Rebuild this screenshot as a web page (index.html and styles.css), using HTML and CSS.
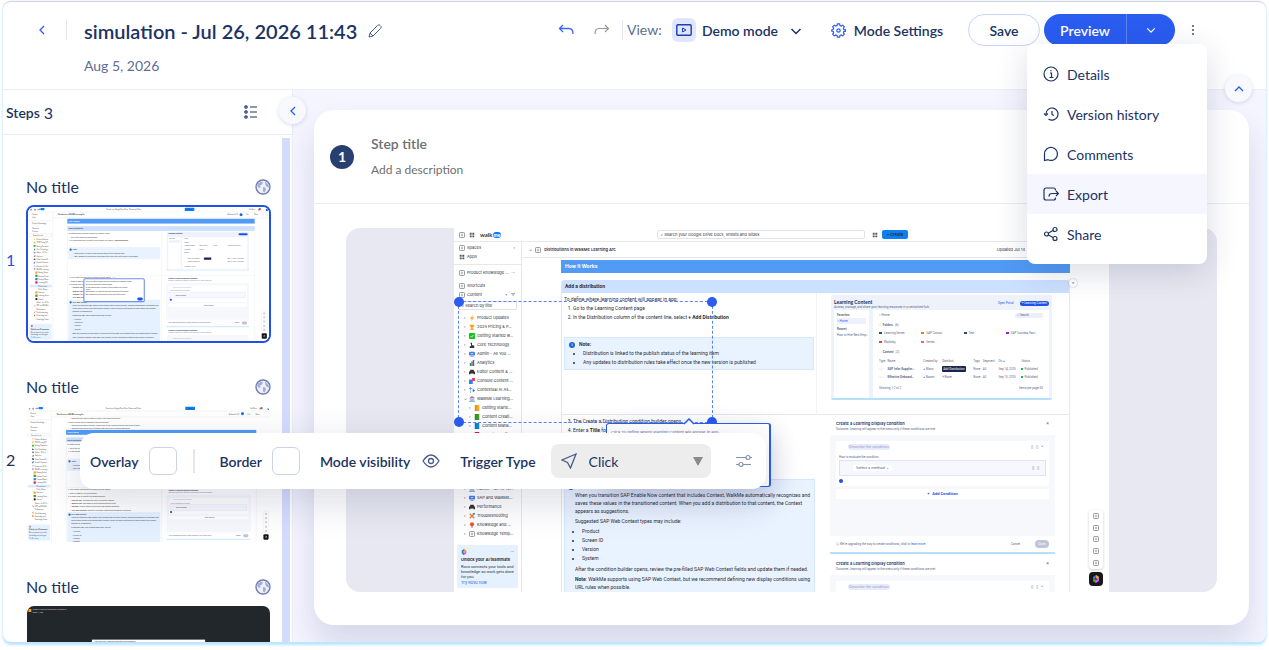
FILE: index.html
```html
<!DOCTYPE html>
<html lang="en">
<head>
  <meta charset="UTF-8">
  <title>Simulation editor</title>
  <link rel="stylesheet" href="styles.css">
</head>
<body>
<svg class="sprite" width="0" height="0" aria-hidden="true">
  <symbol id="globe" viewBox="0 0 16 16">
    <circle cx="8" cy="8" r="7" fill="#eef0fb" stroke="#6f7bb5" stroke-width="1.400"/>
    <path d="M3 4.500 6 2.500l2 1-1 2-2 1 .5 2-1.500 .5L2.200 7zM8 8l2.500 .8.5 1.700-1.500 3-1.500-1zM10 2.500l3.500 3 .5 3-2-.5-1.500-2z" fill="#a3aed6"/>
  </symbol>
  <symbol id="left" viewBox="0 0 12 12"><path d="M8 2 4 6l4 4" fill="none" stroke="currentColor" stroke-width="1.300"/></symbol>
  <symbol id="down" viewBox="0 0 12 12"><path d="M1.500 4 6 8.500 10.500 4" fill="none" stroke="currentColor" stroke-width="1.500"/></symbol>
  <symbol id="bolt" viewBox="0 0 8 8"><path d="M5 0 1 5h2.500L3 8l4-5H4.500z" fill="#ffb020"/></symbol>
  <symbol id="trophy" viewBox="0 0 8 8"><path d="M1 1h6v2L5 5v1h1v2H2V6h1V5L1 3z" fill="#f5a623"/></symbol>
  <symbol id="check" viewBox="0 0 8 8"><rect width="8" height="8" rx="1" fill="#14c41c"/><path d="m2 4 1.500 1.500L6 2.500" fill="none" stroke="#fff"/></symbol>
  <symbol id="arm" viewBox="0 0 8 8"><path d="M2 1h2v3l3 1v3H1V6l2-1z" fill="#333"/></symbol>
  <symbol id="monitor" viewBox="0 0 8 8"><rect y="1" width="8" height="5" rx="1" fill="#4c7df0"/><path d="M2 7.500h4" stroke="#4c7df0"/><path d="M2.500 3.500h3" stroke="#fff"/></symbol>
  <symbol id="chart" viewBox="0 0 8 8"><path d="M1 4h2v4H1z" fill="#18a05e"/><path d="M3 2h2v6H3z" fill="#e34b4b"/><path d="M5 0h2v8H5z" fill="#1f6feb"/></symbol>
  <symbol id="car" viewBox="0 0 8 8"><path d="M1 3 2 1h4l1 2 1 1v3H6V6H2v1H0V4z" fill="#333"/></symbol>
  <symbol id="rocket" viewBox="0 0 8 8"><path d="M0 2h5v6H0z" fill="#2684ff"/><path d="M4 0h4v4H4z" fill="#f1416c"/></symbol>
  <symbol id="spark" viewBox="0 0 8 8"><path d="M2 0v4M0 2h4M2 5v3" stroke="#4c8dff"/><path d="m5 2 3 3-3 2z" fill="#1a73e8"/></symbol>
  <symbol id="school" viewBox="0 0 8 8"><path d="M0 3 4 0l4 3z" fill="#e0654a"/><path d="M1 3h6v4H1z" fill="#9fc3ff"/><path d="M0 7.500h8" stroke="#5a7"/></symbol>
  <symbol id="book" viewBox="0 0 8 8"><path d="M1 0h6v8H1z" fill="currentColor"/><path d="M2.200 0v8" stroke="#0003"/></symbol>
  <symbol id="wrench" viewBox="0 0 8 8"><path d="m1 1 6 6M7 1 1 7" stroke="#e8752b" stroke-width="1.500"/><path d="M5 0h3v2H5z" fill="#4d8bf5"/></symbol>
  <symbol id="pin" viewBox="0 0 8 8"><circle cx="4" cy="3" r="2.800" fill="#f05a28"/><path d="M4 5v3" stroke="#a33"/></symbol>
  <symbol id="page" viewBox="0 0 8 8"><rect x=".6" y=".6" width="6.800" height="6.800" rx="1.500" fill="none" stroke="#777"/><path d="M2.500 3h3M2.500 5h3" stroke="#777" stroke-width=".8"/></symbol>
  <symbol id="grid" viewBox="0 0 8 8"><path d="M1 1h2.500v2.500H1zM4.500 1H7v2.500H4.500zM1 4.500h2.500V7H1zM4.500 4.500H7V7H4.500z" fill="#555"/></symbol>
  <symbol id="rovo" viewBox="0 0 8 8"><path d="M4 0 1 2v4l3 2V5L2.500 4 4 3z" fill="#1f7bf2"/><path d="M4 0v3l1.500 1L4 5v3l3-2V2z" fill="#bf63f3"/><path d="M4 0 7 2 5.500 4 4 3z" fill="#fca700"/><path d="M4 8 1 6l1.500-2L4 5z" fill="#6a9a23"/></symbol>

  <symbol id="shell" viewBox="0 0 655 364">
    <rect width="655" height="364" fill="#fff"/>
    <path d="M0 13.500h655M67.500 14v350M0 36.500h67M68 29.500h587" stroke="#e3e5e9" fill="none"/>
    <g font-family="Inter, sans-serif" font-size="4" fill="#444">
      <use href="#grid" x="6" y="4" width="6" height="6"/><use href="#grid" x="16" y="4" width="6" height="6"/>
      <text x="25" y="9" font-weight="700">walk</text><rect x="34" y="3" width="11" height="6" rx="2" fill="#0b7bff"/>
      <text x="213" y="8">Search your Google Drive Docs, Sheets and Slides</text>
      <rect x="426" y="2" width="26" height="9" rx="1" fill="#0c7ff2"/><text x="433" y="8">Create</text>
      <text x="600" y="8">Ask Rovo</text><circle cx="630" cy="6" r="3" fill="#e34935"/><use href="#grid" x="624" y="4" width="6" height="6"/><circle cx="649" cy="8" r="3" fill="#1558d6"/>
      <text x="82" y="23" font-weight="700">Distributions in WalkMe Learning Arc</text>
      <text x="542" y="23">Updated Jul 14</text><circle cx="579" cy="21" r="4" fill="#1868db"/><text x="592" y="23">Edit</text><text x="614" y="23">Share</text><text x="636" y="23">⌕ ⋯</text>
      <text><tspan x="12" y="21">Spaces</tspan><tspan x="12" y="30">Apps</tspan><tspan x="12" y="46">Product Knowledge …</tspan><tspan x="12" y="59">Shortcuts</tspan><tspan x="12" y="68">Content</tspan><tspan x="14" y="79">Search by title</tspan></text>
      <rect x="4" y="73" width="60" height="8" rx="1" fill="none" stroke="#dcdfe4"/>
      <text>
        <tspan x="23" y="90">Product Updates</tspan><tspan x="23" y="99">2026 Pricing &amp; P…</tspan><tspan x="23" y="108">Getting Started w…</tspan><tspan x="23" y="117">Core Technology</tspan><tspan x="23" y="126">Admin - All You …</tspan><tspan x="23" y="135">Analytics</tspan><tspan x="23" y="144">Editor Content &amp; …</tspan><tspan x="23" y="153">Console Content …</tspan><tspan x="23" y="162">Contextual AI As…</tspan><tspan x="23" y="171">WalkMe Learning…</tspan><tspan x="28" y="180">Getting Starte…</tspan><tspan x="28" y="189">Content Creati…</tspan><tspan x="28" y="198">Content Mana…</tspan><tspan x="28" y="207">Learning Defi…</tspan><tspan x="28" y="216">Distributions</tspan><tspan x="28" y="225">Public Share…</tspan><tspan x="28" y="234">Analytics</tspan><tspan x="28" y="243">Learning Assis…</tspan><tspan x="28" y="252">Tutorial</tspan><tspan x="23" y="261">Admin - for All Te…</tspan><tspan x="23" y="270">SAP and WalkMe…</tspan><tspan x="23" y="279">Performance</tspan><tspan x="23" y="288">Troubleshooting</tspan><tspan x="23" y="297">Knowledge and …</tspan><tspan x="23" y="306">Knowledge Temp…</tspan>
      </text>
      <rect x="5" y="211" width="60" height="7" fill="#4c9aff" opacity=".2"/>
      <use href="#bolt" x="15" y="85" width="6" height="6"/><use href="#trophy" x="15" y="94" width="6" height="6"/><use href="#check" x="15" y="103" width="6" height="6"/><use href="#arm" x="15" y="112" width="6" height="6"/><use href="#monitor" x="15" y="121" width="6" height="6"/><use href="#chart" x="15" y="130" width="6" height="6"/><use href="#car" x="15" y="139" width="6" height="6"/><use href="#rocket" x="15" y="148" width="6" height="6"/><use href="#spark" x="15" y="157" width="6" height="6"/><use href="#school" x="15" y="166" width="6" height="6"/>
      <rect x="20" y="175" width="6" height="6" fill="#f5a623"/><rect x="20" y="184" width="6" height="6" fill="#3f9b2f"/><rect x="20" y="193" width="6" height="6" fill="#1187d8"/><rect x="20" y="202" width="6" height="6" fill="#e01e3c"/><rect x="20" y="229" width="6" height="6" fill="#f5a623"/><rect x="20" y="238" width="6" height="6" fill="#3f9b2f"/><circle cx="23" cy="250" r="3" fill="#222"/>
      <use href="#spark" x="15" y="265" width="6" height="6"/><use href="#wrench" x="15" y="283" width="6" height="6"/><use href="#pin" x="15" y="292" width="6" height="6"/>
      <rect x="4" y="317" width="60" height="43" rx="2" fill="#e5f1ff"/><use href="#rovo" x="8" y="320" width="6" height="6"/>
      <text><tspan x="8" y="333" font-weight="700">Unlock your AI teammate</tspan><tspan x="8" y="341">Rovo connects your tools</tspan><tspan x="8" y="347">knowledge so work gets</tspan><tspan x="8" y="356" fill="#1868db">Try Rovo now</tspan></text>
    </g>
  </symbol>

  <symbol id="floaters" viewBox="0 0 655 364">
    <rect x="635" y="281" width="14" height="59" rx="3" fill="#fff" stroke="#e6e6ea"/>
    <use href="#page" x="639" y="286" width="6" height="6"/><use href="#page" x="639" y="297" width="6" height="6"/><use href="#page" x="639" y="308" width="6" height="6"/><use href="#page" x="639" y="320" width="6" height="6"/><use href="#page" x="639" y="331" width="6" height="6"/>
    <rect x="635" y="343" width="14" height="15" rx="3" fill="#17181c"/><use href="#rovo" x="639" y="347" width="6" height="7"/>
  </symbol>

  <g id="article" font-family="Roboto, sans-serif" font-size="5" fill="#444">
    <rect x="107" y="32" width="509" height="13" fill="#519bf5"/><text x="111" y="41" font-weight="700" fill="#fff">How It Works</text>
    <rect x="107" y="52" width="509" height="13" fill="#cce0ff"/><text x="110" y="61" font-weight="700">Add a distribution</text>
    <path d="M107.500 65v340M616 65v340M362.500 65v340M107 186.500h509" stroke="#e6e8ec" fill="none"/>
    <text><tspan x="110" y="73">To define where learning content will appear in app:</tspan><tspan x="112" y="83">1. Go to the Learning Content page</tspan><tspan x="112" y="92">2. In the Distribution column of the content line, select <tspan font-weight="700">+ Add Distribution</tspan></tspan></text>
    <rect x="110" y="109" width="249" height="33" fill="#e9f2ff"/><circle cx="116" cy="116" r="3" fill="#1868db"/>
    <text><tspan x="122" y="118" font-weight="700">Note:</tspan><tspan x="124" y="128">• Distribution is linked to the publish status of the learning item</tspan><tspan x="124" y="137">• Any updates to distribution rules take effect once the new version is published</tspan></text>
    <text><tspan x="112" y="194">3. The Create a Distribution condition builder opens</tspan><tspan x="112" y="203">4. Enter a <tspan font-weight="700">Title</tspan> for your Distribution</tspan><tspan x="112" y="212">5. Choose how to identify the target audience</tspan><tspan x="119" y="221">• <tspan font-weight="700">Current URL</tspan>: The page the user is currently viewing</tspan><tspan x="119" y="230">• <tspan font-weight="700">Website URL</tspan>: Any page on a site that belongs to a set</tspan><tspan x="119" y="239">• <tspan font-weight="700">Variable</tspan>: A value stored on the site that changes anything</tspan><tspan x="119" y="248">• <tspan font-weight="700">SAP Web Context</tspan>: Target for the page context and additional conditions</tspan></text>
    <rect x="110" y="252" width="249" height="160" fill="#e5f1ff"/><circle cx="116" cy="259" r="3" fill="#1868db"/>
    <text><tspan x="121" y="261" font-weight="700">SAP Web Context</tspan><tspan x="121" y="269">When you transition SAP Enable Now content that includes Context, WalkMe automatically recognizes and</tspan><tspan x="121" y="277">saves these values in the transitioned content. When you add a distribution to that content, the Context</tspan><tspan x="121" y="285">appears as suggestions.</tspan><tspan x="121" y="295">Suggested SAP Web Context types may include:</tspan><tspan x="124" y="306">• Product</tspan><tspan x="124" y="315">• Screen ID</tspan><tspan x="124" y="324">• Version</tspan><tspan x="124" y="333">• System</tspan><tspan x="121" y="344">After the condition builder opens, review the pre-filled SAP Web Context fields and update them if needed.</tspan><tspan x="121" y="356">Note: WalkMe supports using SAP Web Context, but we recommend defining new display conditions</tspan></text>
    <rect x="377" y="67" width="223" height="104" rx="2" fill="#edf2fb"/><path d="M377 171h223" stroke="#b6e0ff" stroke-width="2"/><rect x="381" y="82" width="34" height="88" fill="#fff"/><rect x="418" y="82" width="178" height="88" fill="#fff"/>
    <text x="381" y="74" font-weight="700" fill="#1b2f5e">Learning Content</text><rect x="572" y="71" width="25" height="6" rx="3" fill="#1f50e8"/>
    <rect x="383" y="90" width="30" height="7" fill="#eef1fd"/>
    <g fill="#667" font-size="4"><text x="383" y="88">Favorites</text><text x="424" y="88">Home</text><text x="424" y="99">Folders</text><text x="424" y="107">▪ Learning Series</text><text x="464" y="107">▪ SAP Concur</text><text x="504" y="107">▪ Test</text><text x="542" y="107">▪ SAP Success Fact…</text><text x="424" y="117">▪ Workday</text><text x="464" y="117">▪ Series</text><text x="424" y="126">Content</text><text x="428" y="142">□ □ SAP Infor Supplier</text><text x="542" y="142">Sep 14, 2025 ▪ Published</text><text x="428" y="150">□ □ Effective Onboard</text><text x="542" y="150">Sep 15, 2025 ▪ Published</text><text x="426" y="163">Showing 1-2 of 2</text></g>
    <rect x="478" y="137" width="20" height="6" rx="1" fill="#16264c"/>
    <rect x="376" y="206" width="225" height="100" fill="#f6f8fc"/><path d="M376 325h225" stroke="#b6e0ff" stroke-width="2"/>
    <text x="381" y="195" font-weight="700" fill="#1b2f5e">Create a Learning Display condition</text><text x="381" y="201" font-size="4" fill="#889">Outcome: Learning will appear in the menu only if these conditions</text>
    <rect x="382" y="213" width="213" height="45" fill="#fff"/><text x="394" y="220" fill="#aab3d6">Describe the condition</text><text x="386" y="229" font-size="4" fill="#889">How to evaluate the condition</text><rect x="385" y="232" width="206" height="15" fill="#f7f8fd" stroke="#dde3f4"/><text x="401" y="241" font-size="4">Select a method</text><circle cx="388" cy="252" r="3" fill="#1f50e8"/>
    <rect x="382" y="262" width="213" height="9" fill="#fff"/><text x="476" y="268" font-size="4" fill="#1f50e8">+ Add Condition</text><text x="382" y="316" font-size="4" fill="#667">We’re upgrading the way to create conditions, click to learn more</text><text x="562" y="316" font-size="4">Cancel</text><rect x="581" y="311" width="14" height="8" rx="4" fill="#c0c4d6"/>
    <text x="381" y="337" font-weight="700" fill="#1b2f5e">Create a Learning Display condition</text><text x="381" y="343" font-size="4" fill="#889">Outcome: Learning will appear in the menu only if these conditions</text><rect x="378" y="348" width="220" height="30" fill="#f6f8fc"/><text x="394" y="358" fill="#aab3d6">Describe the condition</text>
  </g>
</svg>

<div class="window">
  <header class="header">
    <button class="back" aria-label="Back"><svg width="12" height="12"><use href="#left"/></svg></button>
    <div class="heading">
      <div class="heading-row">
        <h1>simulation - Jul 26, 2026 11:43</h1>
        <button aria-label="Rename"><svg width="14" height="14" viewBox="0 0 14 14" fill="none" stroke="#46598a"><path d="M1 13l1-4L9.500 1.500a1.500 1.500 0 0 1 2.500 0l.5.500a1.500 1.500 0 0 1 0 2.500L5 12zM2 9l3 3"/></svg></button>
      </div>
      <div class="date">Aug 5, 2026</div>
    </div>
    <div class="actions">
      <button class="undo" aria-label="Undo"><svg width="16" height="12" viewBox="0 0 16 12" fill="none" stroke="#3b68f0" stroke-width="1.300"><path d="M5 1 1.500 4.500 5 8M1.500 4.500H11q4 0 4 5.500"/></svg></button>
      <button class="redo" aria-label="Redo"><svg width="16" height="12" viewBox="0 0 16 12" fill="none" stroke="#999" stroke-width="1.200"><path d="m11 1 3.500 3.500L11 8M14.500 4.500H5q-4 0-4 5.500"/></svg></button>
      <label class="view-label" for="view">View:</label>
      <span class="mode-icon"><svg width="16" height="12" viewBox="0 0 16 12" fill="none" stroke="#1a3db8" stroke-width="1.400"><rect x=".8" y=".8" width="14.400" height="10.400" rx="1"/><path d="m6.500 4 3.500 2-3.500 2z" stroke-width="1"/></svg></span>
      <span class="select-wrap">
        <select id="view"><option>Demo mode</option></select>
        <svg class="caret" width="12" height="12"><use href="#down"/></svg>
      </span>
      <button class="settings"><svg width="15" height="15" viewBox="0 0 16 16" fill="none" stroke="#2a5cf0" stroke-width="1.300"><path d="M6.800 1h2.400l.4 1.800 1.300.5 1.600-1 1.700 1.700-1 1.600.5 1.300 1.800.4v1.400l-1.800.4-.5 1.300 1 1.600-1.700 1.700-1.600-1-1.300.5L9.200 15H6.800l-.4-1.800-1.300-.5-1.600 1L1.800 12l1-1.600-.5-1.300L.8 8.700V7.300l1.500-.4.5-1.300-1-1.600 1.700-1.700 1.600 1 1.300-.5z"/><circle cx="8" cy="8" r="1.800"/></svg>Mode Settings</button>
      <button class="save">Save</button>
      <div class="preview"><button>Preview</button><button aria-label="Preview options"><svg width="10" height="10"><use href="#down"/></svg></button></div>
      <div class="more">
        <button aria-label="More"><svg width="4" height="12" viewBox="0 0 4 12" fill="#6b7a9c"><rect x="1" y="1" width="2" height="2"/><rect x="1" y="5" width="2" height="2"/><rect x="1" y="9" width="2" height="2"/></svg></button>
        <div class="menu" role="menu">
          <button role="menuitem"><svg viewBox="0 0 16 16"><circle cx="8" cy="8" r="7"/><path d="M7 7h1.500v4M6.500 11.500h4M8 4v1.200"/></svg>Details</button>
          <button role="menuitem"><svg viewBox="0 0 16 16"><path d="M3 8a6 6 0 1 1 2.500 4.900M1 7.500l2 2 2-2M9 5v3.500l2 1"/></svg>Version history</button>
          <button role="menuitem"><svg viewBox="0 0 16 16"><path d="M1.500 14.500V8A6.500 6.500 0 1 1 5 13.700z"/></svg>Comments</button>
          <button role="menuitem" class="active"><svg viewBox="0 0 16 16"><path d="M12.500 4.500V4a2 2 0 0 0-2-2H3a2 2 0 0 0-2 2v8a2 2 0 0 0 2 2h7.500a2 2 0 0 0 2-2v-.5M6 10.500q0-3 3-3h6.500M13 5 15.500 7.500 13 10"/></svg>Export</button>
          <button role="menuitem"><svg viewBox="0 0 16 16"><circle cx="3.500" cy="8" r="2"/><circle cx="12" cy="3.500" r="2"/><circle cx="12" cy="12.500" r="2"/><path d="m5.500 7 4.500-2.500M5.500 9l4.500 2.500"/></svg>Share</button>
        </div>
      </div>
    </div>
    <button class="round fold-header" aria-label="Collapse header"><svg width="12" height="12"><use href="#left"/></svg></button>
  </header>

  <div class="body">
    <aside class="steps">
      <div class="steps-head">
        <b>Steps</b> <span>3</span>
        <button aria-label="List view"><svg width="14" height="14" viewBox="0 0 14 14" fill="none" stroke="#1b3363" stroke-width="1.200"><circle cx="2" cy="2" r="1.200"/><circle cx="2" cy="7" r="1.200"/><circle cx="2" cy="12" r="1.200"/><path d="M6 2h7M6 7h7M6 12h7"/></svg></button>
      </div>
      <ol class="step-list">
        <li class="step selected">
          <div class="step-title">No title <svg width="16" height="16"><use href="#globe"/></svg></div>
          <span class="num">1</span>
          <svg class="thumb" viewBox="0 0 655 364" preserveAspectRatio="xMidYMin slice">
            <use href="#shell" width="655" height="364"/>
            <use href="#article"/>
            <g font-family="Roboto, sans-serif" font-size="5" fill="#444">
              <rect x="152" y="195" width="164" height="62" rx="3" fill="#fff" stroke="#6f8ff0" stroke-width="3"/>
              <path d="m229 194 4-4 4 4z" fill="#fff" stroke="#6f8ff0"/>
              <text><tspan x="157" y="205">Click To define where learning content will appear in app:</tspan><tspan x="157" y="213">Go to the Learning Content page</tspan><tspan x="157" y="219">In the Distribution column of the content line, select</tspan><tspan x="157" y="225">Note:</tspan><tspan x="157" y="232">Distribution is linked to the publish status of the item</tspan><tspan x="157" y="238">Any updates to distribution rules take effect once</tspan></text>
              <rect x="297" y="246" width="15" height="8" rx="4" fill="#1f50e8"/>
            </g>
            <use href="#floaters" width="655" height="364"/>
          </svg>
        </li>
        <li class="step">
          <div class="step-title">No title <svg width="16" height="16"><use href="#globe"/></svg></div>
          <span class="num">2</span>
          <svg class="thumb" viewBox="0 0 655 364" preserveAspectRatio="xMidYMin slice">
            <use href="#shell" width="655" height="364"/>
            <text font-family="Roboto, sans-serif" font-size="5" fill="#444"><tspan x="119" y="36">• Distribute the video content to users in the menu from here</tspan><tspan x="110" y="45">• Where a group can be separate from one another</tspan><tspan x="119" y="53">• Distribute the menu content, choose one of the content sections and more of them</tspan><tspan x="119" y="61">• Distribute the resources of content, with sources of content categories</tspan></text>
            <g transform="translate(0 32)"><use href="#article"/></g>
            <use href="#floaters" width="655" height="364"/>
          </svg>
        </li>
        <li class="step">
          <div class="step-title">No title <svg width="16" height="16"><use href="#globe"/></svg></div>
          <svg class="thumb" viewBox="0 0 655 364" preserveAspectRatio="xMidYMin slice">
            <rect width="655" height="364" fill="#22272b"/>
            <rect x="6" y="8" width="8" height="8" rx="1" fill="#f5a20a"/>
            <g font-family="Roboto, sans-serif" font-size="5" fill="#cfd3d8"><text x="17" y="11">Create a Learning Distribution conditions</text><text x="17" y="18">Steps: 1/298</text></g>
            <rect x="176" y="90" width="303" height="120" fill="#fff"/><text x="182" y="97" font-family="Roboto, sans-serif" font-size="5" fill="#333">How does your learning distribution get displayed?</text>
          </svg>
        </li>
      </ol>
      <button class="round fold-steps" aria-label="Collapse steps"><svg width="12" height="12"><use href="#left"/></svg></button>
    </aside>

    <main class="stage">
      <section class="card">
        <div class="card-head">
          <span class="badge">1</span>
          <div class="fields">
            <input class="step-name" type="text" aria-label="Step title" placeholder="Step title">
            <input class="step-desc" type="text" aria-label="Description" placeholder="Add a description">
          </div>
        </div>
        <div class="frame">
          <div class="capture">
            <div class="top">
              <svg><use href="#page"/></svg><svg><use href="#grid"/></svg>
              <span class="logo">walk<b>me</b></span>
              <span class="search">⌕ Search your Google Drive Docs, Sheets and Slides</span>
              <svg><use href="#grid"/></svg><span class="create">+ Create</span>
            </div>
            <div class="cols">
              <nav class="nav">
                <ul class="spaces"><li><svg><use href="#page"/></svg>Spaces<i>›</i></li><li><svg><use href="#grid"/></svg>Apps</li></ul>
                <ul class="space"><li><svg><use href="#page"/></svg>Product Knowledge …<i>···</i></li></ul>
                <ul class="space-links"><li><svg><use href="#page"/></svg>Shortcuts</li><li><svg><use href="#page"/></svg>Content<i>+ &nbsp; ▽</i></li></ul>
                <div class="find">⌕ Search by title</div>
                <ul class="tree">
                  <li><svg><use href="#bolt"/></svg>Product Updates</li>
                  <li><svg><use href="#trophy"/></svg>2026 Pricing &amp; P…</li>
                  <li><svg><use href="#check"/></svg>Getting Started w…</li>
                  <li><svg><use href="#arm"/></svg>Core Technology</li>
                  <li><svg><use href="#monitor"/></svg>Admin - All You …</li>
                  <li><svg><use href="#chart"/></svg>Analytics</li>
                  <li><svg><use href="#car"/></svg>Editor Content &amp; …</li>
                  <li><svg><use href="#rocket"/></svg>Console Content …</li>
                  <li><svg><use href="#spark"/></svg>Contextual AI As…</li>
                  <li class="open"><svg><use href="#school"/></svg>WalkMe Learning…</li>
                  <li class="sub"><svg class="orange"><use href="#book"/></svg>Getting Starte…</li>
                  <li class="sub"><svg class="green"><use href="#book"/></svg>Content Creati…</li>
                  <li class="sub"><svg class="blue"><use href="#book"/></svg>Content Mana…</li>
                  <li class="sub"><svg class="red"><use href="#book"/></svg>Learning Defi…</li>
                  <li class="sub">Distributions</li>
                  <li class="sub">Public Share…</li>
                  <li class="sub"><svg class="orange"><use href="#book"/></svg>Analytics</li>
                  <li class="sub"><svg class="green"><use href="#book"/></svg>Learning Assis…</li>
                  <li class="sub">Tutorial</li>
                  <li><svg><use href="#school"/></svg>Admin - for All Te…</li>
                  <li><svg><use href="#monitor"/></svg>SAP and WalkMe…</li>
                  <li><svg><use href="#car"/></svg>Performance</li>
                  <li><svg><use href="#wrench"/></svg>Troubleshooting</li>
                  <li><svg><use href="#pin"/></svg>Knowledge and …</li>
                  <li><svg><use href="#page"/></svg>Knowledge Temp…</li>
                </ul>
                <div class="promo">
                  <svg><use href="#rovo"/></svg><i>···</i>
                  <b>Unlock your AI teammate</b>
                  <p>Rovo connects your tools and<br>knowledge so work gets done<br>for you.</p>
                  <a href="#">Try Rovo now</a>
                </div>
              </nav>
              <div class="doc">
                <div class="crumb"><i>⌄</i><svg><use href="#page"/></svg><b>Distributions in WalkMe Learning Arc</b><span>Updated Jul 14</span></div>
                <h2>How It Works</h2>
                <div class="sheet">
                  <h3>Add a distribution</h3>
                  <div class="cell first">
                    <p>To define where learning content will appear in app:</p>
                    <ol><li>Go to the Learning Content page</li><li>In the Distribution column of the content line, select <b>+ Add Distribution</b></li></ol>
                    <div class="note">
                      <b><span class="info">i</span>Note:</b>
                      <ul><li>Distribution is linked to the publish status of the learning item</li><li>Any updates to distribution rules take effect once the new version is published</li></ul>
                    </div>
                  </div>
                  <div class="cell">
                    <div class="library">
                      <div class="library-head"><div><b>Learning Content</b><small>Access, manage, and share your learning resources in a centralized hub.</small></div><span>Open Portal</span><em>+ Learning Content</em></div>
                      <div class="library-body">
                        <div class="library-nav"><b>Favorites</b><span>⌂ Home</span><b>Recent</b><small>How to Hire New Emp…</small></div>
                        <div class="library-main">
                          <div class="line"><span>⌂ Home</span><u>⌕ Search</u></div>
                          <div class="line sub-title">□ <b>Folders</b> <em>(6)</em></div>
                          <div class="folders"><span><i class="navy"></i>Learning Series</span><span><i class="gold"></i>SAP Concur</span><span><i class="navy"></i>Test</span><span><i class="violet"></i>SAP Success Fact…</span><span><i class="redish"></i>Workday</span><span><i class="pink"></i>Series</span></div>
                          <div class="line sub-title">□ <b>Content</b> <em>(2)</em></div>
                          <table>
                            <tr><th>Type</th><th>Name</th><th>Created by</th><th>Distribut.</th><th>Tags</th><th>Segment</th><th>On ●</th><th>Status</th></tr>
                            <tr><td>□ □</td><td><b>SAP Infor Supplier…</b></td><td>● Maria</td><td><mark>Add Distribution</mark></td><td>None</td><td>All</td><td>Sep 14, 2025</td><td><i></i>Published</td></tr>
                            <tr><td>□ □</td><td><b>Effective Onboard…</b></td><td>● Naomi</td><td>+ None</td><td>None</td><td>All</td><td>Sep 15, 2025</td><td><i></i>Published</td></tr>
                          </table>
                          <div class="line foot"><span>Showing 1-2 of 2</span><span>Items per page 50</span></div>
                        </div>
                      </div>
                    </div>
                  </div>
                  <div class="cell second">
                    <ol start="3"><li>The Create a Distribution condition builder opens</li><li>Enter a <b>Title</b> for</li></ol>
                    <div class="note context">
                      <b><span class="info">i</span></b>
                      <p>When you transition SAP Enable Now content that includes Context, WalkMe automatically recognizes and<br>saves these values in the transitioned content. When you add a distribution to that content, the Context<br>appears as suggestions.</p>
                      <p>Suggested SAP Web Context types may include:</p>
                      <ul><li>Product</li><li>Screen ID</li><li>Version</li><li>System</li></ul>
                      <p>After the condition builder opens, review the pre-filled SAP Web Context fields and update them if needed.</p>
                      <p><b>Note</b>: WalkMe supports using SAP Web Context, but we recommend defining new display conditions using<br>URL rules when possible.</p>
                    </div>
                  </div>
                  <div class="cell">
                    <div class="dialog">
                      <div class="dialog-head"><b>Create a Learning Display condition</b><i>×</i><small>Outcome: Learning will appear in the menu only if these conditions are met</small></div>
                      <div class="dialog-body">
                        <div class="cond">
                          <div class="cond-top"><span class="pill">Describe the condition</span><i>▯ &nbsp; ▯ &nbsp; ^</i></div>
                          <small>How to evaluate the condition</small>
                          <div class="method"><span>Select a method ⌄</span><i>▯ &nbsp; ▯</i></div>
                          <span class="plus"></span>
                        </div>
                        <div class="add">+ &nbsp; Add Condition</div>
                      </div>
                      <div class="dialog-foot"><span>ⓘ We’re upgrading the way to create conditions, click to <a href="#">learn more</a></span><span>Cancel</span><em>Done</em></div>
                    </div>
                    <div class="dialog">
                      <div class="dialog-head"><b>Create a Learning Display condition</b><i>×</i><small>Outcome: Learning will appear in the menu only if these conditions are met</small></div>
                      <div class="dialog-body"><div class="cond"><div class="cond-top"><span class="pill">Describe the condition</span><i>▯ &nbsp; ▯ &nbsp; ^</i></div></div></div>
                    </div>
                  </div>
                </div>
              </div>
            </div>
            <div class="float-tools"><svg><use href="#page"/></svg><svg><use href="#page"/></svg><svg><use href="#page"/></svg><svg><use href="#page"/></svg><svg><use href="#page"/></svg></div>
            <div class="float-rovo"><svg><use href="#rovo"/></svg></div>
            <span class="expand">×</span>
            <div class="marquee"><i></i><i></i><i></i><i></i></div>
            <div class="balloon"><svg width="12" height="7" viewBox="0 0 12 7"><path d="m1 6 5-5 5 5" fill="#fff" stroke="#2a5cf0" stroke-width="1.500"/></svg>Click To define where learning content will appear in app:</div>
          </div>
        </div>
      </section>
    </main>
  </div>

  <div class="toolbar">
    <label for="overlay">Overlay</label><button class="swatch" id="overlay"></button>
    <span class="sep"></span>
    <label for="border">Border</label><button class="swatch" id="border"></button>
    <button class="visibility">Mode visibility <svg width="18" height="14" viewBox="0 0 18 14" fill="none" stroke="#46598a" stroke-width="1.300"><path d="M1 7q8-12 16 0-8 12-16 0z"/><circle cx="9" cy="7" r="2.500"/></svg></button>
    <label for="trigger">Trigger Type</label>
    <span class="trigger">
      <svg width="16" height="16" viewBox="0 0 16 16" fill="none" stroke="#46598a" stroke-width="1.300"><path d="M15 1 1 7l5.500 2.500L9.500 15z"/></svg>
      <select id="trigger"><option>Click</option></select>
      <svg width="10" height="9" viewBox="0 0 10 9" fill="#8a8a8a"><path d="M0 0h10L5 9z"/></svg>
    </span>
    <button aria-label="Advanced"><svg width="18" height="14" viewBox="0 0 18 14" fill="none" stroke="#8292b5" stroke-width="1.200"><path d="M1 3.500h10M15 3.500h2M1 10.500h3M8 10.500h8"/><circle cx="13" cy="3.500" r="2"/><circle cx="6" cy="10.500" r="2"/></svg></button>
  </div>
</div>
</body>
</html>
```

FILE: styles.css
```css
* {
  box-sizing: border-box;
}

body {
  margin: 0;
  font-family: Lato, 'Open Sans', sans-serif;
  font-size: 14px;
  color: #1b3363;
  background: #fff;
}

h1, h2, h3, p, ul, ol {
  margin: 0;
  padding: 0;
}

ul, ol {
  list-style: none;
}

i, em {
  font-style: normal;
}

svg {
  flex: none;
}

button, select, input {
  border: none;
  padding: 0;
  background: none;
  font: inherit;
  color: inherit;
  appearance: none;
}

button {
  display: flex;
  flex: none;
  align-items: center;
  justify-content: center;
}

.sprite {
  position: absolute;
}

.window {
  position: relative;
  display: flex;
  flex-direction: column;
  height: calc(100vh - 9px);
  margin: 1px 3px 8px;
  border-top: 1px solid #cdd3e0;
  border-radius: 8px;
  box-shadow: 0 3px 3px #b9e3ff, 0 0 2px #c9e8ff;
}

/* header */

.header {
  position: relative;
  z-index: 3;
  display: flex;
  align-items: flex-start;
  height: 88px;
  flex: none;
  padding: 12px 63px 0 24px;
  border-bottom: 1px solid #ecedf8;
}

.back {
  width: 40px;
  height: 20px;
  margin-top: 6px;
  padding-right: 10px;
  border-right: 1px solid #e4e7f3;
  color: #2a5cf0;
}

.heading {
  padding-left: 17px;
}

.heading-row {
  display: flex;
  align-items: center;
  gap: 11px;
  height: 34px;
}

h1 {
  font-size: 20px;
  font-weight: 600;
}

.date {
  margin-top: 8px;
  line-height: 20px;
  color: #5d6d93;
}

.actions {
  display: flex;
  align-items: center;
  height: 32px;
  margin-left: auto;
}

.undo, .redo {
  width: 28px;
  height: 20px;
  margin-right: 8px;
}

.redo {
  margin-right: 6px;
}

.view-label {
  padding-left: 4px;
  border-left: 1px solid #e4e7f3;
  line-height: 20px;
  color: #5d6d93;
  width: 50px;
}

.mode-icon {
  display: flex;
  align-items: center;
  justify-content: center;
  width: 24px;
  height: 24px;
  margin-right: 6px;
  border-radius: 6px;
  background: #e0e6fe;
}

.select-wrap {
  position: relative;
  width: 100px;
  margin-right: 28px;
}

.select-wrap select {
  width: 100%;
  font-weight: 600;
}

.caret {
  position: absolute;
  right: 0;
  top: 3px;
  pointer-events: none;
}

.settings {
  gap: 8px;
  width: 114px;
  margin-right: 24px;
  font-weight: 600;
  white-space: nowrap;
}

.save {
  width: 72px;
  height: 32px;
  margin-right: 4px;
  border: 1px solid #c9d4fb;
  border-radius: 16px;
  font-weight: 600;
}

.preview {
  display: flex;
  width: 131px;
  height: 32px;
  margin-right: 8px;
  border-radius: 16px;
  background: #2a5cf0;
  color: #fff;
  font-weight: 600;
}

.preview button:first-child {
  width: 83px;
  border-right: 1px solid #5d84f5;
}

.preview button:last-child {
  flex: 1;
}

.more {
  position: relative;
}

.more > button {
  width: 20px;
  height: 20px;
}

.menu {
  position: absolute;
  right: -4px;
  top: 24px;
  width: 180px;
  padding: 10px 0;
  border-radius: 8px;
  background: #fff;
  box-shadow: 0 8px 32px rgba(30, 40, 90, .16);
}

.menu button {
  gap: 8px;
  justify-content: flex-start;
  width: 100%;
  height: 40px;
  padding-left: 16px;
}

.menu .active {
  background: #f5f6ff;
}

.menu svg {
  width: 16px;
  height: 16px;
  fill: none;
  stroke: #1b3363;
  stroke-width: 1.2;
}

.round {
  position: absolute;
  width: 27px;
  height: 27px;
  border-radius: 50%;
  background: #f8f9fe;
  color: #2a5cf0;
  box-shadow: 0 1px 4px rgba(40, 60, 120, .18);
}

.fold-header {
  right: 14px;
  bottom: -13px;
}

.fold-header svg {
  transform: rotate(90deg);
}

/* steps list */

.body {
  display: flex;
  flex: 1;
  min-height: 0;
}

.steps {
  position: relative;
  z-index: 1;
  display: flex;
  flex-direction: column;
  width: 290px;
  flex: none;
  border-right: 1px solid #e9ebf8;
}

.steps-head {
  display: flex;
  align-items: center;
  gap: 4px;
  height: 45px;
  flex: none;
  padding: 0 34px 0 3px;
  border-bottom: 1px solid #e9ebf8;
}

.steps-head b {
  font-weight: 600;
}

.steps-head span {
  font-size: 16px;
}

.steps-head button {
  margin-left: auto;
}

.fold-steps {
  top: 7px;
  right: -14px;
}

.step-list {
  flex: 1;
  min-height: 0;
  margin: 3px 2px 0 0;
  padding: 30px 11px 0 0;
  overflow: hidden;
  border-right: 8px solid #d4dcfe;
  border-radius: 0 0 0 8px;
}

.step {
  display: grid;
  grid-template-columns: 23px 1fr;
  align-items: center;
  margin-bottom: 25px;
  font-size: 16px;
}

.step-title {
  grid-column: 2;
  display: flex;
  align-items: center;
  justify-content: space-between;
  height: 37px;
}

.num {
  padding: 0 0 30px 3px;
}

.thumb {
  grid-column: 2;
  width: 100%;
  height: 138px;
  border: 1px solid #fff;
  border-radius: 8px;
}

.selected .thumb {
  border: 2px solid #1f50e8;
}

.selected .num {
  color: #1f50e8;
}

/* stage */

.stage {
  flex: 1;
  min-width: 0;
  padding: 20px 17px 17px 21px;
  overflow: hidden;
  border-radius: 0 0 8px 0;
  background: #f5f5ff;
}

.card {
  height: 100%;
  border-radius: 20px;
  background: #fff;
  box-shadow: 0 20px 32px rgba(30, 40, 100, .14);
}

.card-head {
  display: flex;
  align-items: center;
  gap: 17px;
  height: 94px;
  padding: 0 16px;
  border-bottom: 1px solid #e9ebf8;
}

.badge {
  width: 24px;
  height: 24px;
  border-radius: 50%;
  background: #27406f;
  color: #fff;
  font-weight: 700;
  line-height: 24px;
  text-align: center;
}

.fields {
  display: flex;
  flex-direction: column;
  gap: 6px;
}

.fields input {
  height: 20px;
}

.step-name {
  font-size: 14px;
  font-weight: 600;
}

.step-desc {
  font-size: 12px;
}

.fields input::placeholder {
  color: #6f6f6f;
}

.frame {
  display: flex;
  justify-content: center;
  height: 364px;
  margin: 24px 32px 0;
  overflow: hidden;
  border-radius: 14px;
  background: #e7e8f1;
}

/* captured page */

.capture {
  position: relative;
  display: flex;
  flex-direction: column;
  width: 655px;
  background: #fff;
  color: #2c2f36;
  font: 4px/9px Inter, sans-serif;
  white-space: nowrap;
}

.capture svg {
  width: 6px;
  height: 6px;
}

.capture a {
  color: #1868db;
  text-decoration: none;
}

.top {
  display: flex;
  align-items: center;
  height: 14px;
  flex: none;
  padding-left: 5px;
  border-bottom: 1px solid #e6e8ec;
}

.top svg {
  margin-right: 4px;
}

.logo {
  width: 22px;
  margin-left: 1px;
  font: 700 6px/9px Lato, sans-serif;
}

.logo b {
  padding: 0 1px;
  border-radius: 3px;
  background: #0b7bff;
  color: #fff;
  font-size: 5px;
}

.search {
  width: 208px;
  height: 9px;
  margin: 0 7px 0 155px;
  padding-left: 3px;
  border: 1px solid #e0e2e7;
  border-radius: 2px;
  line-height: 7px;
}

.create {
  width: 26px;
  border-radius: 2px;
  background: #0c7ff2;
  font-weight: 700;
  text-align: center;
}

.cols {
  display: flex;
  flex: 1;
  min-height: 0;
}

.nav {
  display: flex;
  flex-direction: column;
  width: 68px;
  border-right: 1px solid #e6e8ec;
}

.nav li {
  display: flex;
  align-items: center;
  gap: 2px;
  height: 9px;
}

.nav li i {
  margin-left: auto;
}

.spaces, .space, .space-links {
  padding: 1px 6px 3px 5px;
}

.spaces {
  border-bottom: 1px solid #e6e8ec;
}

.space {
  padding-top: 3px;
}

.space-links {
  padding-bottom: 2px;
}

.find {
  height: 9px;
  margin: 0 4px 3px;
  padding-left: 3px;
  border: 1px solid #dfe1e6;
  border-radius: 1px;
  line-height: 7px;
}

.tree {
  flex: 1;
  min-height: 0;
  overflow: hidden;
}

.tree li {
  padding-left: 10px;
}

.tree li::before {
  content: '›';
  width: 3px;
}

.tree .open::before {
  content: '⌄';
}

.tree .sub {
  padding-left: 15px;
}

.orange {
  color: #f5a623;
}

.green {
  color: #3f9b2f;
}

.blue {
  color: #1187d8;
}

.red {
  color: #e01e3c;
}

.promo {
  display: flex;
  flex-wrap: wrap;
  align-items: center;
  justify-content: space-between;
  margin: 2px 3px 4px;
  padding: 3px 4px 1px;
  border-radius: 2px;
  background: #e5f1ff;
  line-height: 8px;
}

.promo b {
  width: 100%;
}

.promo p {
  width: 100%;
  font: 4px/5px Roboto, sans-serif;
}

.doc {
  flex: 1;
  min-width: 0;
  overflow: hidden;
}

.crumb {
  display: flex;
  align-items: center;
  gap: 3px;
  height: 16px;
  padding: 0 84px 0 7px;
  border-bottom: 1px solid #e6e8ec;
}

.crumb b {
  font-weight: 600;
}

.crumb span {
  margin-left: auto;
}

.doc h2 {
  margin: 2px 39px 7px;
  padding-left: 4px;
  background: #519bf5;
  color: #fff;
  font-size: 5px;
  line-height: 13px;
}

.sheet {
  display: grid;
  grid-template-columns: 255px 1fr;
  grid-template-rows: 13px 122px auto;
  margin: 0 39px;
  border: 1px solid #e6e8ec;
  border-top: none;
  border-radius: 3px 3px 0 0;
  font: 5px/9px Roboto, sans-serif;
}

.doc h3 {
  grid-column: 1 / 3;
  padding-left: 3px;
  border-radius: 3px 3px 0 0;
  background: #cce0ff;
  font-size: 5px;
  line-height: 13px;
}

.cell {
  padding: 2px;
  border-bottom: 1px solid #e6e8ec;
}

.first {
  border-right: 1px solid #f2f3f6;
}

.cell ol {
  padding-left: 9px;
  list-style: decimal;
}

.note {
  margin-top: 15px;
  padding: 2px 4px 2px;
  border: 1px solid #d6e6fb;
  background: #e9f2ff;
}

.note > b {
  display: flex;
  gap: 4px;
  align-items: center;
}

.note ul {
  padding-left: 14px;
  list-style: disc;
}

.info {
  width: 6px;
  height: 6px;
  border-radius: 50%;
  background: #1868db;
  color: #fff;
  font-size: 4px;
  line-height: 6px;
  text-align: center;
}

.context {
  margin-top: 44px;
  padding: 2px 10px;
}

.context > b {
  height: 9px;
  margin-left: -7px;
}

.context p {
  margin-bottom: 2px;
  line-height: 8px;
}

.context ul {
  padding-left: 7px;
  margin-bottom: 2px;
}

.library {
  height: 105px;
  margin: 0 15px 0 12px;
  padding: 2px 3px 0;
  overflow: hidden;
  border-bottom: 2px solid #b6e0ff;
  border-radius: 2px;
  background: #edf2fb;
  font-size: 3px;
  line-height: 5px;
  color: #5c6885;
}

.library-head {
  display: flex;
  align-items: center;
  gap: 6px;
  height: 13px;
}

.library-head div {
  flex: 1;
  line-height: 4px;
}

.library-head b {
  display: block;
  font: 700 5px/6px Lato, sans-serif;
  color: #1b2f5e;
}

.library small, .dialog small {
  font-size: 3px;
}

.library-head span {
  color: #2a5cf0;
}

.library-head em {
  padding: 0 2px;
  border-radius: 3px;
  background: #1f50e8;
  color: #fff;
}

.library-body {
  display: flex;
  gap: 4px;
  height: 100%;
}

.library-nav {
  display: flex;
  flex-direction: column;
  width: 35px;
  padding: 2px 3px;
  background: #fff;
  line-height: 6px;
}

.library-nav span {
  margin-bottom: 2px;
  background: #eef1fd;
  color: #2a5cf0;
}

.library-main {
  flex: 1;
  padding: 3px 6px;
  background: #fff;
}

.line {
  display: flex;
  justify-content: space-between;
}

.line u {
  width: 28px;
  padding-left: 2px;
  border-radius: 2px;
  background: #eceff8;
  text-decoration: none;
}

.sub-title {
  justify-content: flex-start;
  gap: 2px;
  margin-top: 5px;
}

.folders {
  display: grid;
  grid-template-columns: repeat(4, 1fr);
  gap: 4px 5px;
  margin-top: 3px;
}

.folders i {
  display: inline-block;
  width: 3px;
  height: 2px;
  margin-right: 2px;
}

.navy {
  background: #2d4a7c;
}

.gold {
  background: #c98a0e;
}

.violet {
  background: #8b24e8;
}

.redish {
  background: #e2452f;
}

.pink {
  background: #ec5aa8;
}

.library table {
  width: 100%;
  margin-top: 2px;
  border-spacing: 0;
}

.library th, .library td {
  height: 8px;
  padding: 0;
  font-size: 3px;
  font-weight: 400;
  text-align: left;
}

.library td i {
  display: inline-block;
  width: 2px;
  height: 2px;
  margin-right: 1px;
  background: #14b85a;
}

.library mark {
  padding: 1px;
  border-radius: 1px;
  background: #16264c;
  color: #fff;
}

.foot {
  margin-top: 5px;
}

.dialog {
  margin: 0 12px 3px 11px;
  border-bottom: 2px solid #b6e0ff;
  font-size: 4px;
  line-height: 6px;
  color: #5c6885;
}

.dialog-head {
  position: relative;
  height: 18px;
  padding: 3px 6px;
}

.dialog-head b {
  display: block;
  font: 600 4px/7px Inter, sans-serif;
  color: #1b2f5e;
}

.dialog-head i {
  position: absolute;
  right: 6px;
  top: 3px;
  font-size: 5px;
}

.dialog-head small {
  display: block;
  line-height: 5px;
}

.dialog-body {
  height: 101px;
  padding: 6px;
  background: #f6f8fc;
}

.cond {
  height: 45px;
  padding: 2px 3px;
  background: #fff;
}

.cond-top, .method {
  display: flex;
  justify-content: space-between;
  height: 11px;
  padding: 1px 3px;
}

.pill {
  height: 6px;
  margin-left: 6px;
  padding: 0 1px;
  border-radius: 3px;
  background: #e8ebfa;
  color: #9aa4cf;
}

.method {
  align-items: center;
  height: 16px;
  padding: 0 6px 0 13px;
  border: 1px solid #dde3f4;
  background: #f7f8fd;
}

.method span {
  padding: 0 3px;
  background: #fff;
}

.plus {
  display: block;
  width: 4px;
  height: 4px;
  margin-top: 3px;
  border-radius: 50%;
  background: #1f50e8;
}

.add {
  margin-top: 3px;
  background: #fff;
  color: #1f50e8;
  font-weight: 700;
  line-height: 10px;
  text-align: center;
}

.dialog-foot {
  display: flex;
  align-items: center;
  gap: 15px;
  height: 16px;
  padding: 0 6px;
  font-size: 3px;
}

.dialog-foot span:first-child {
  flex: 1;
}

.dialog-foot em {
  width: 14px;
  border-radius: 4px;
  background: #c0c4d6;
  color: #fff;
  line-height: 8px;
  text-align: center;
}

.float-tools {
  position: absolute;
  right: 6px;
  bottom: 23px;
  display: flex;
  flex-direction: column;
  align-items: center;
  justify-content: space-around;
  width: 14px;
  height: 59px;
  border-radius: 4px;
  background: #fff;
  box-shadow: 0 1px 3px rgba(0, 0, 0, .2);
}

.float-rovo {
  position: absolute;
  right: 6px;
  bottom: 6px;
  display: flex;
  align-items: center;
  justify-content: center;
  width: 14px;
  height: 14px;
  border-radius: 4px;
  background: #17181c;
}

.float-rovo svg {
  width: 8px;
  height: 8px;
}

.expand {
  position: absolute;
  right: 32px;
  top: 51px;
  width: 8px;
  height: 8px;
  border-radius: 50%;
  background: #fff;
  box-shadow: 0 0 2px rgba(0, 0, 0, .3);
  line-height: 8px;
  text-align: center;
}

.marquee {
  position: absolute;
  left: 4px;
  top: 73px;
  width: 255px;
  height: 122px;
  border: 1px dashed #5b82f5;
}

.marquee i {
  position: absolute;
  width: 10px;
  height: 10px;
  border-radius: 50%;
  background: #2a5cf0;
}

.marquee i:nth-child(odd) {
  left: -5px;
}

.marquee i:nth-child(even) {
  right: -5px;
}

.marquee i:nth-child(-n+2) {
  top: -5px;
}

.marquee i:nth-child(n+3) {
  bottom: -5px;
}

.balloon {
  position: absolute;
  left: 152px;
  top: 195px;
  width: 165px;
  height: 64px;
  padding: 4px;
  border: 1px solid #2a5cf0;
  border-right-width: 2px;
  border-radius: 3px;
  background: #fff;
  box-shadow: 0 8px 24px rgba(30, 50, 110, .2);
  color: #53659a;
}

.balloon svg {
  position: absolute;
  left: 76px;
  top: -6px;
  width: 12px;
  height: 7px;
}

/* element toolbar */

.toolbar {
  position: absolute;
  z-index: 2;
  left: 77px;
  bottom: 153px;
  display: flex;
  align-items: center;
  width: 686px;
  height: 56px;
  padding: 0 12px 0 10px;
  border-radius: 14px;
  background: #fff;
  box-shadow: 0 12px 40px rgba(30, 40, 90, .16);
  font-weight: 600;
  white-space: nowrap;
}

.toolbar label {
  margin-right: 10px;
}

.swatch {
  width: 28px;
  height: 28px;
  border: 1px solid #cbd3e4;
  border-radius: 6px;
}

.sep {
  width: 2px;
  height: 24px;
  margin: 0 25px 0 16px;
  background: #e4e7f0;
}

.visibility {
  gap: 12px;
  margin: 0 20px;
}

.trigger {
  display: flex;
  align-items: center;
  gap: 12px;
  width: 160px;
  height: 34px;
  margin: 0 24px 0 5px;
  padding: 0 8px 0 10px;
  border-radius: 8px;
  background: #ededed;
  font-weight: 400;
}

.trigger select {
  flex: 1;
}
```
